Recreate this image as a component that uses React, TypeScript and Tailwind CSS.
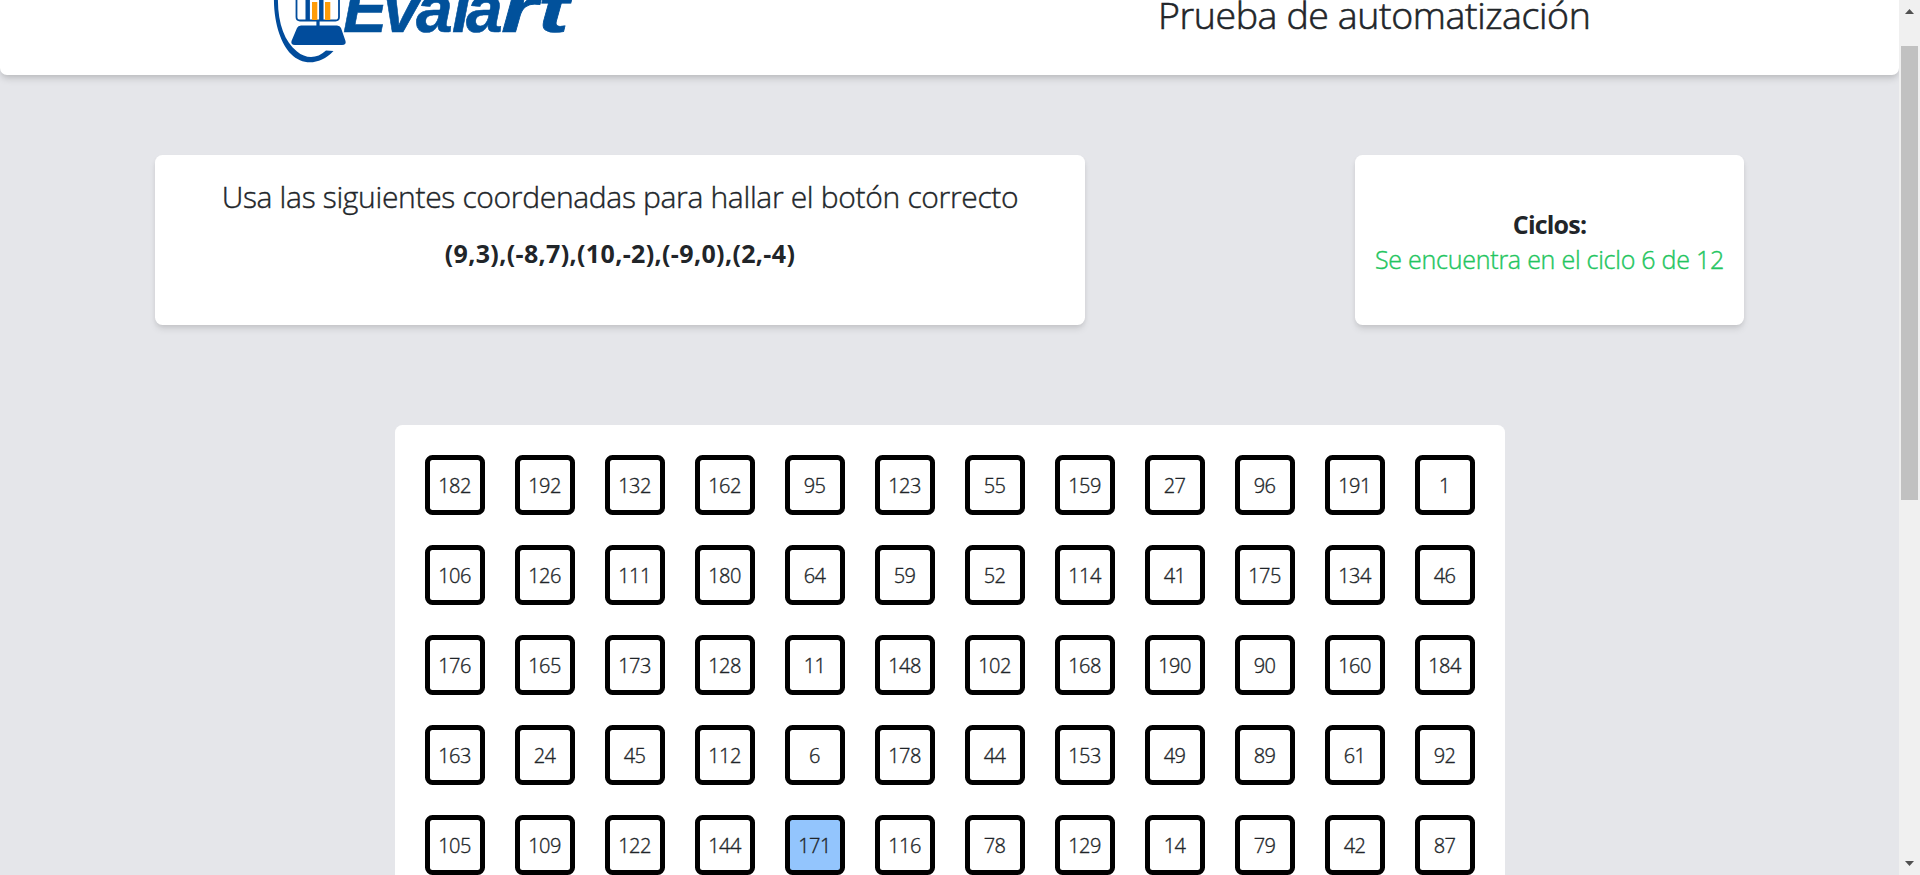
import React from "react";

const ROWS: number[][] = [
  [182, 192, 132, 162, 95, 123, 55, 159, 27, 96, 191, 1],
  [106, 126, 111, 180, 64, 59, 52, 114, 41, 175, 134, 46],
  [176, 165, 173, 128, 11, 148, 102, 168, 190, 90, 160, 184],
  [163, 24, 45, 112, 6, 178, 44, 153, 49, 89, 61, 92],
  [105, 109, 122, 144, 171, 116, 78, 129, 14, 79, 42, 87],
];

const ACTIVE = 171;

function Logo() {
  return (
    <svg width="330" height="75" viewBox="260 0 330 75" className="block" role="img" aria-label="Evalart">
      <path
        d="M274 -6C273 22 281 44 291 54C303 66 320 65 333.500 51L326 50.500C317 59 306 59 297 51.500C284 41 277 22 278 -6Z"
        fill="#014c9c"
      />
      <g fill="none" stroke="#014c9c">
        <path d="M296.500 -4V17Q296.500 20.500 300 20.500H335.500Q339 20.500 339 17V-4" strokeWidth="1.800" />
        <path d="M307.700 -2V20M321.300 -2V20" strokeWidth="4.400" />
        <path d="M318 20V27" strokeWidth="3.200" />
      </g>
      <path d="M312 2h5.300v18h-5.300zM325 2h5.300v18h-5.300z" fill="#ff9c07" />
      <path d="M301 25.500H337Q340 25.500 341 28L345.500 41Q346.500 45 342 45H295Q290.500 45 291.500 41L297 28Q298 25.500 301 25.500Z" fill="#014c9c" />
      <g
        fill="#01519b"
        stroke="#01519b"
        strokeWidth="0.600"
        fontFamily="'Liberation Sans', sans-serif"
        fontWeight="700"
        fontStyle="italic"
        fontSize="66"
      >
        <text x="343 383 416 452 466" y="32.200">
          Evala
        </text>
        <text transform="translate(501 32.200) scale(1.43 1)">rt</text>
      </g>
    </svg>
  );
}

function Header() {
  return (
    <header className="flex h-[75px] shrink-0 rounded-b-[7px] bg-white pl-[260px] shadow-[0_5px_7px_-1px_rgba(0,0,0,0.13),0_2px_5px_-1px_rgba(0,0,0,0.08)]">
      <Logo />
      <h1 className="-mt-[13px] ml-[568px] text-[37.5px] leading-[56px] whitespace-nowrap tracking-[-0.4px] [-webkit-text-stroke:0.6px]">
        Prueba de automatización
      </h1>
    </header>
  );
}

function Card({ className, children }: { className: string; children: React.ReactNode }) {
  return (
    <section
      className={`flex h-[170px] flex-col items-center rounded-[7.5px] bg-white whitespace-nowrap shadow-[0_5px_7px_-1px_rgba(0,0,0,0.1),0_2px_5px_-1px_rgba(0,0,0,0.08)] ${className}`}
    >
      {children}
    </section>
  );
}

function Cell({ value }: { value: number }) {
  return (
    <button
      className={`flex size-[60px] items-center justify-center rounded-[7.5px] border-[5px] border-black pt-[2px] pr-px text-[20px] leading-[30px] font-light tracking-[-0.6px] [-webkit-text-stroke:0.35px] ${
        value === ACTIVE ? "bg-[#93c5fd]" : "bg-white"
      }`}
    >
      {value}
    </button>
  );
}

function Scrollbar() {
  return (
    <div className="flex h-full w-[21px] shrink-0 flex-col items-center bg-[#f0f0f0]">
      <svg width="21" height="46" viewBox="0 0 21 46" className="shrink-0">
        <path d="M6 14L10.500 9L15 14Z" fill="#505050" />
      </svg>
      <div className="h-[454px] w-[17px] shrink-0 bg-[#c1c1c1]" />
      <div className="flex-1" />
      <svg width="21" height="16" viewBox="0 0 21 16" className="shrink-0">
        <path d="M6 2L10.500 7L15 2Z" fill="#505050" />
      </svg>
    </div>
  );
}

export default function App() {
  return (
    <div className="flex h-[875px] w-[1920px] overflow-hidden bg-[#e5e6ea] font-['Open_Sans','Noto_Sans',sans-serif] font-light text-[#212529]">
      <main className="flex min-w-0 flex-1 flex-col overflow-hidden">
        <Header />
        <div className="mt-[80px] flex shrink-0 justify-between pr-[155px] pl-[155px]">
          <Card className="w-[930px] pt-[19px]">
            <h2 className="text-[30px] leading-[45px] tracking-[-0.33px] [-webkit-text-stroke:0.4px]">
              Usa las siguientes coordenadas para hallar el botón correcto
            </h2>
            <p className="mt-[15px] text-[25px] leading-[38px] font-bold tracking-[0.36px]">
              (9,3),(-8,7),(10,-2),(-9,0),(2,-4)
            </p>
          </Card>
          <Card className="w-[389px] justify-center pt-[3px] text-[25px] leading-[35px]">
            <h2 className="font-bold tracking-[-0.8px]">Ciclos:</h2>
            <p className="tracking-[-0.24px] text-[#22c55e] [-webkit-text-stroke:0.4px]">
              Se encuentra en el ciclo 6 de 12
            </p>
          </Card>
        </div>
        <div className="mt-[100px] ml-[395px] grid w-[1110px] shrink-0 grid-cols-12 gap-[30px] rounded-[7.5px] bg-white p-[30px]">
          {ROWS.flat().map((value) => (
            <Cell key={value} value={value} />
          ))}
        </div>
      </main>
      <Scrollbar />
    </div>
  );
}
